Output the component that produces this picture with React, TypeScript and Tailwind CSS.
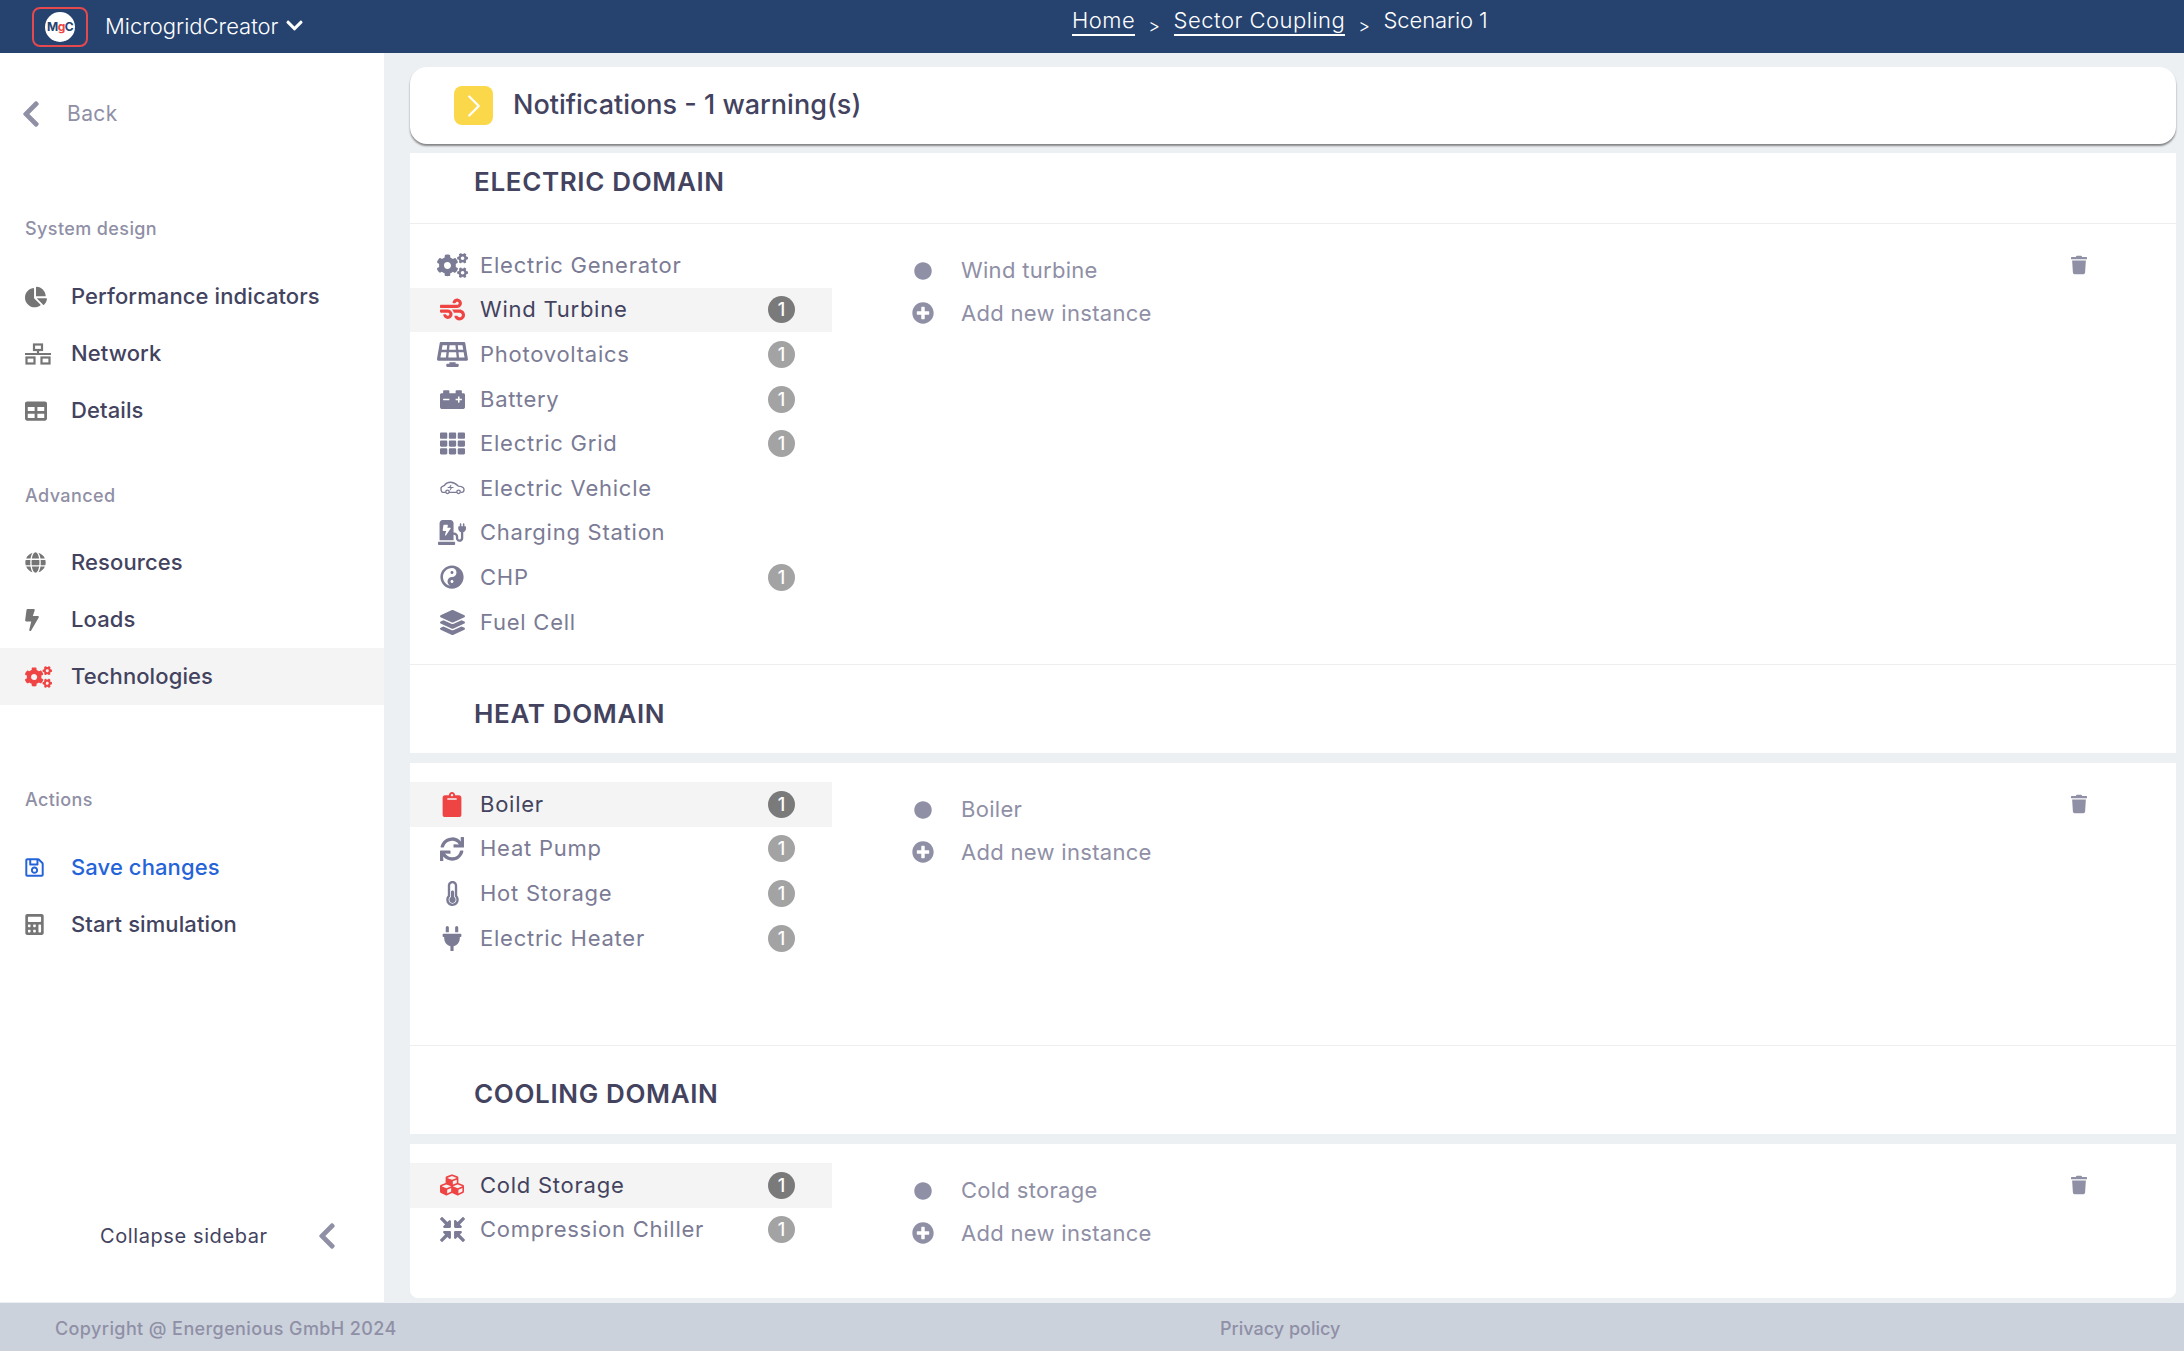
import React from "react";
import { ChevronRight } from "lucide-react";
import {
  FaBolt, FaCalculator, FaCarBattery, FaChargingStation, FaChartPie, FaChevronDown, FaChevronLeft,
  FaCircle, FaClipboard, FaCogs, FaCompressArrowsAlt, FaCubes, FaGlobe, FaLayerGroup, FaPlug, FaPlusCircle,
  FaRegSave, FaSolarPanel, FaSync, FaTable, FaTh, FaThermometerHalf, FaTrash, FaWind, FaYinYang,
} from "react-icons/fa";

const SitemapIcon = ({ className }: { className?: string }) => (
  <svg viewBox="0 0 26 22" className={className} fill="none" stroke="currentColor" strokeWidth="2.2">
    <rect x="9" y="1.5" width="8" height="5.5" />
    <rect x="1.5" y="14.5" width="8" height="6" />
    <rect x="16.5" y="14.5" width="8" height="6" />
    <path d="M13 7v4M0 11h26" />
  </svg>
);

const EvIcon = ({ className }: { className?: string }) => (
  <svg viewBox="0 0 26 14" className={className} fill="none" stroke="currentColor" strokeWidth="1.4">
    <path d="M1 7.5C1 5.5 3 5 4.5 4.5 6 2 8 1 11 1c3.5 0 5.5 1.5 8 4 3 .3 6 1 6 3.5 0 2-1 3-2.5 3h-1M6 11.5H3c-1.2 0-2-1.8-2-4M9.5 11.5h8" />
    <circle cx="7.8" cy="11" r="1.8" />
    <circle cx="19.3" cy="11" r="1.8" />
    <path d="M8 6.5h6M11.5 4l-1.5 2.5 2 0-1.5 2.5" strokeWidth="1.1" />
  </svg>
);

type Tech = { name: string; icon: React.ComponentType<{ className?: string }>; size: string; badge?: boolean; active?: boolean };

const electric: Tech[] = [
  { name: "Electric Generator", icon: FaCogs, size: "w-[31px] h-[25px]" },
  { name: "Wind Turbine", icon: FaWind, size: "w-[25px] h-[25px]", badge: true, active: true },
  { name: "Photovoltaics", icon: FaSolarPanel, size: "w-[31px] h-[25px]", badge: true },
  { name: "Battery", icon: FaCarBattery, size: "w-[25px] h-[25px]", badge: true },
  { name: "Electric Grid", icon: FaTh, size: "w-[25px] h-[25px]", badge: true },
  { name: "Electric Vehicle", icon: EvIcon, size: "w-[25px] h-[14px]" },
  { name: "Charging Station", icon: FaChargingStation, size: "w-[28px] h-[25px]" },
  { name: "CHP", icon: FaYinYang, size: "w-[24px] h-[24px]", badge: true },
  { name: "Fuel Cell", icon: FaLayerGroup, size: "w-[25px] h-[25px]" },
];

const heat: Tech[] = [
  { name: "Boiler", icon: FaClipboard, size: "w-[20px] h-[25px]", badge: true, active: true },
  { name: "Heat Pump", icon: FaSync, size: "w-[24px] h-[24px]", badge: true },
  { name: "Hot Storage", icon: FaThermometerHalf, size: "w-[25px] h-[25px]", badge: true },
  { name: "Electric Heater", icon: FaPlug, size: "w-[24px] h-[25px]", badge: true },
];

const cooling: Tech[] = [
  { name: "Cold Storage", icon: FaCubes, size: "w-[26px] h-[24px]", badge: true, active: true },
  { name: "Compression Chiller", icon: FaCompressArrowsAlt, size: "w-[25px] h-[25px]", badge: true },
];

const TechRow = ({ item }: { item: Tech }) => {
  const Icon = item.icon;
  return (
    <div className={`flex items-center h-[44.6px] pl-[16px] pr-[37px] ${item.active ? "bg-[#f4f4f4]" : ""}`}>
      <span className={`w-[52px] mr-[2px] flex justify-center ${item.active ? "text-[#ef4444]" : "text-[#7b7b95]"}`}>
        <Icon className={item.size} />
      </span>
      <span className={`flex-1 text-[22px] tracking-[0.75px] ${item.active ? "text-[#43435f]" : "text-[#7b7b95]"}`}>{item.name}</span>
      {item.badge && (
        <span className={`w-[27px] h-[27px] rounded-full flex items-center justify-center text-white text-[18px] font-medium ${item.active ? "bg-[#7a7a7a]" : "bg-[#a3a3a3]"}`}>1</span>
      )}
    </div>
  );
};

const TechBody = ({ items, instance, height }: { items: Tech[]; instance: string; height: string }) => (
  <div className={`flex items-start ${height}`}>
    <div className="w-[422px] shrink-0">
      {items.map((item) => (
        <TechRow key={item.name} item={item} />
      ))}
    </div>
    <div className="flex-1 pl-[71px] pt-[6px] text-[22px] text-[#8f8fa6] tracking-[0.3px]">
      <div className="flex items-center h-[43px]">
        <span className="w-[40px] mr-[18px] flex justify-center"><FaCircle className="w-[18px] h-[18px]" /></span>
        {instance}
      </div>
      <div className="flex items-center h-[43px]">
        <span className="w-[40px] mr-[18px] flex justify-center -mt-[2px]"><FaPlusCircle className="w-[22px] h-[22px]" /></span>
        Add new instance
      </div>
    </div>
    <div className="pt-[12px] pr-[89px] text-[#8f8fa6]">
      <FaTrash className="w-[16px] h-[20px]" />
    </div>
  </div>
);

const DomainTitle = ({ title, className }: { title: string; className: string }) => (
  <div className={`pl-[64px] text-[26px] font-semibold text-[#43435f] tracking-[0.65px] ${className}`}>{title}</div>
);

const NavItem = ({ icon: Icon, label, size, active, blue }: { icon: React.ComponentType<{ className?: string }>; label: string; size: string; active?: boolean; blue?: boolean }) => (
  <div className={`flex items-center h-[57px] pl-[25px] ${active ? "bg-[#f4f4f4]" : ""}`}>
    <span className={`w-[46px] ${active ? "text-[#ef4444]" : blue ? "text-[#2563d9]" : "text-[#757575]"}`}>
      <Icon className={size} />
    </span>
    <span className={`text-[22px] font-medium tracking-[0.1px] ${blue ? "text-[#2563d9]" : "text-[#43435f]"}`}>{label}</span>
  </div>
);

const SideLabel = ({ label, className }: { label: string; className: string }) => (
  <div className={`pl-[25px] h-[24px] flex items-center text-[18px] font-medium tracking-[0.4px] text-[#8f8fa6] ${className}`}>{label}</div>
);

export default function App() {
  return (
    <div className="h-screen w-full flex flex-col overflow-hidden bg-[#edf0f3] font-['Inter',sans-serif]">
      <header className="h-[53px] shrink-0 bg-[#26436f] flex items-center text-white">
        <div className="w-[1072px] shrink-0 flex items-center pl-[32px]">
          <div className="w-[56px] h-[40px] rounded-lg border-2 border-[#e5484d] flex items-center justify-center">
            <span className="w-[30px] h-[30px] rounded-full bg-white flex items-center justify-center text-[12px] font-bold text-[#26436f] tracking-[-0.6px]">
              M<span className="text-[#ef4444]">g</span>C
            </span>
          </div>
          <span className="ml-[17px] text-[22px] font-light">MicrogridCreator</span>
          <FaChevronDown className="ml-[6px] -mt-[2px] w-[19px] h-[19px]" />
        </div>
        <nav className="flex items-start text-[22px] font-light pb-[8px] tracking-[0.5px]">
          <span className="border-b-2 border-white leading-[27px]">Home</span>
          <span className="mx-[13px] mt-[5px] text-[18px]">&gt;</span>
          <span className="border-b-2 border-white leading-[27px]">Sector Coupling</span>
          <span className="mx-[13px] mt-[5px] text-[18px]">&gt;</span>
          <span className="leading-[27px] tracking-[-0.1px]">Scenario 1</span>
        </nav>
      </header>

      <div className="flex-1 flex min-h-0 pb-px">
        <aside className="w-[384px] shrink-0 bg-white flex flex-col">
          <div className="mt-[41px] h-[40px] flex items-center pl-[21px] text-[#8f8fa6]">
            <FaChevronLeft className="w-[20px] h-[30px]" />
            <span className="ml-[26px] text-[21px] tracking-[0.4px]">Back</span>
          </div>
          <SideLabel label="System design" className="mt-[82px]" />
          <div className="mt-[28px]">
            <NavItem icon={FaChartPie} label="Performance indicators" size="w-[22px] h-[22px]" />
            <NavItem icon={SitemapIcon} label="Network" size="w-[26px] h-[22px]" />
            <NavItem icon={FaTable} label="Details" size="w-[22px] h-[22px]" />
          </div>
          <SideLabel label="Advanced" className="mt-[44px]" />
          <div className="mt-[27px]">
            <NavItem icon={FaGlobe} label="Resources" size="w-[21px] h-[21px]" />
            <NavItem icon={FaBolt} label="Loads" size="w-[14px] h-[22px]" />
            <NavItem icon={FaCogs} label="Technologies" size="w-[27px] h-[22px]" active />
          </div>
          <SideLabel label="Actions" className="mt-[82px]" />
          <div className="mt-[28px]">
            <NavItem icon={FaRegSave} label="Save changes" size="w-[19px] h-[21px]" blue />
            <NavItem icon={FaCalculator} label="Start simulation" size="w-[19px] h-[21px]" />
          </div>
          <div className="mt-auto mb-[51px] flex items-center pl-[100px] text-[#43435f]">
            <span className="text-[20px] tracking-[0.6px]">Collapse sidebar</span>
            <FaChevronLeft className="ml-[49px] w-[20px] h-[30px] text-[#8f8fa6]" />
          </div>
        </aside>

        <main className="flex-1 min-w-0 flex flex-col pl-[26px] pr-[8px] pt-[14px]">
          <div className="h-[77px] shrink-0 bg-white rounded-[17px] shadow-[0_2px_2px_rgba(0,0,0,0.45)] flex items-center pl-[44px]">
            <span className="w-[39px] h-[39px] rounded-lg bg-[#fbd84a] flex items-center justify-center text-white">
              <ChevronRight className="w-[38px] h-[38px]" strokeWidth={1.4} />
            </span>
            <span className="ml-[20px] text-[27px] font-medium text-[#43435f]">Notifications - 1 warning(s)</span>
          </div>

          <section className="mt-[9px] bg-white">
            <DomainTitle title="ELECTRIC DOMAIN" className="h-[71px] pb-[13px] flex items-center border-b border-[#eeeeee]" />
            <div className="pt-[19px]">
              <TechBody items={electric} instance="Wind turbine" height="h-[421px]" />
            </div>
          </section>
          <section className="bg-white border-t border-[#eeeeee]">
            <DomainTitle title="HEAT DOMAIN" className="h-[88px] pt-[8px] flex items-center" />
          </section>
          <section className="mt-[10px] bg-white pt-[19px]">
            <TechBody items={heat} instance="Boiler" height="h-[263px]" />
          </section>
          <section className="bg-white border-t border-[#eeeeee]">
            <DomainTitle title="COOLING DOMAIN" className="h-[88px] pt-[7px] flex items-center" />
          </section>
          <section className="mt-[10px] bg-white pt-[19px] rounded-b-[8px]">
            <TechBody items={cooling} instance="Cold storage" height="h-[135px]" />
          </section>
        </main>
      </div>

      <footer className="h-[48px] shrink-0 bg-[#cbd2dc] flex items-center text-[18px] font-medium text-[#8f8fa6] pt-[2px]">
        <span className="w-[1220px] shrink-0 pl-[55px] tracking-[0.4px]">Copyright @ Energenious GmbH 2024</span>
        <span>Privacy policy</span>
      </footer>
    </div>
  );
}
